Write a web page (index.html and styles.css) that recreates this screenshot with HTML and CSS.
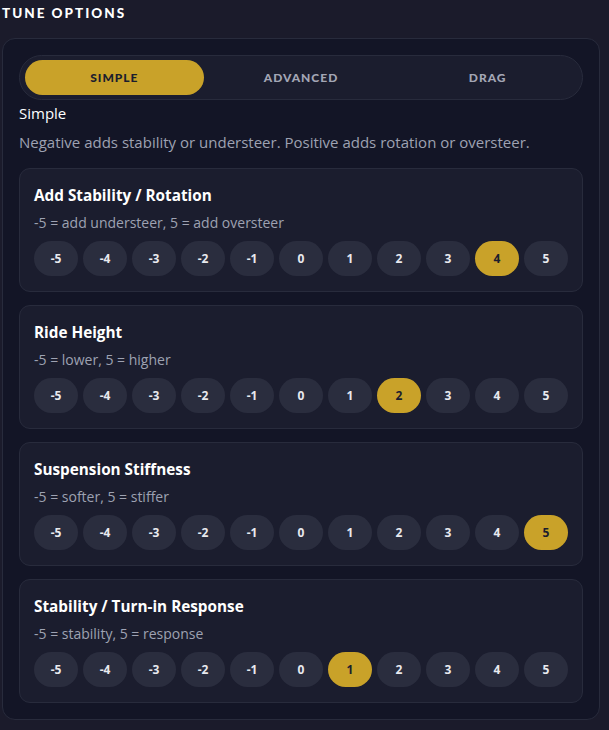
FILE: index.html
```html
<!DOCTYPE html>
<html lang="en">
<head>
    <meta charset="UTF-8">
    <meta name="viewport" content="width=device-width, initial-scale=1.0">
    <title>Tune Options</title>
    <link rel="stylesheet" href="styles.css">
</head>
<body>
    <h2 class="section-title">TUNE OPTIONS</h2>
    <div class="panel">
        <div class="tabs">
            <button class="tab active">SIMPLE</button>
            <button class="tab">ADVANCED</button>
            <button class="tab">DRAG</button>
        </div>
        <div class="mode-name">Simple</div>
        <p class="mode-desc">Negative adds stability or understeer. Positive adds rotation or oversteer.</p>

        <div class="card">
            <h3>Add Stability / Rotation</h3>
            <p class="hint">-5 = add understeer, 5 = add oversteer</p>
            <div class="scale">
                <button>-5</button><button>-4</button><button>-3</button><button>-2</button><button>-1</button><button>0</button><button>1</button><button>2</button><button>3</button><button class="on">4</button><button>5</button>
            </div>
        </div>

        <div class="card">
            <h3>Ride Height</h3>
            <p class="hint">-5 = lower, 5 = higher</p>
            <div class="scale">
                <button>-5</button><button>-4</button><button>-3</button><button>-2</button><button>-1</button><button>0</button><button>1</button><button class="on">2</button><button>3</button><button>4</button><button>5</button>
            </div>
        </div>

        <div class="card">
            <h3>Suspension Stiffness</h3>
            <p class="hint">-5 = softer, 5 = stiffer</p>
            <div class="scale">
                <button>-5</button><button>-4</button><button>-3</button><button>-2</button><button>-1</button><button>0</button><button>1</button><button>2</button><button>3</button><button>4</button><button class="on">5</button>
            </div>
        </div>

        <div class="card">
            <h3>Stability / Turn-in Response</h3>
            <p class="hint">-5 = stability, 5 = response</p>
            <div class="scale">
                <button>-5</button><button>-4</button><button>-3</button><button>-2</button><button>-1</button><button>0</button><button class="on">1</button><button>2</button><button>3</button><button>4</button><button>5</button>
            </div>
        </div>
    </div>
</body>
</html>
```

FILE: styles.css
```css
:root {
    --page-bg: #1b1b2b;
    --panel-bg: #131526;
    --card-bg: #1b1d2e;
    --chip-bg: #2a2d3e;
    --line: #282b3c;
    --gold: #c9a229;
    --text: #ffffff;
    --muted: #9ea2b2;
}

body {
    margin: 0;
    padding: 0 9px 0 2px;
    background-color: var(--page-bg);
    color: var(--text);
    font-family: 'Open Sans', 'Noto Sans', sans-serif;
}

.section-title {
    margin: 0;
    padding-top: 5px;
    height: 38px;
    box-sizing: border-box;
    font-family: 'Lato', sans-serif;
    font-weight: 900;
    font-size: 13.5px;
    letter-spacing: 2px;
    line-height: 16px;
}

.panel {
    background-color: var(--panel-bg);
    border: 1px solid var(--line);
    border-radius: 13px;
    padding: 16px 16px 16px 16px;
}

.tabs {
    display: flex;
    gap: 8px;
    padding: 4px 5px;
    background-color: var(--card-bg);
    border: 1px solid var(--line);
    border-radius: 23px;
}

.tab {
    flex: 1;
    height: 35px;
    border: none;
    border-radius: 18px;
    background: transparent;
    color: #a3a6b5;
    font-family: 'Lato', sans-serif;
    font-weight: 900;
    font-size: 12px;
    letter-spacing: 1px;
    cursor: pointer;
}

.tab.active {
    background-color: var(--gold);
    color: #1b1d2e;
}

.mode-name {
    margin-top: 3px;
    font-size: 15px;
    line-height: 20px;
}

.mode-desc {
    margin: 9px 0 16px;
    color: var(--muted);
    font-size: 15px;
    line-height: 20px;
}

.card {
    background-color: var(--card-bg);
    border: 1px solid var(--line);
    border-radius: 11px;
    padding: 16px 14px 15px;
    margin-bottom: 13px;
}

.card:last-child {
    margin-bottom: 0;
}

.card h3 {
    margin: 0;
    font-size: 15.3px;
    font-weight: 700;
    line-height: 20px;
}

.hint {
    margin: 8px 0 9px;
    color: var(--muted);
    font-size: 14px;
    line-height: 19px;
}

.scale {
    display: flex;
    gap: 5px;
}

.scale button {
    flex: 1;
    height: 35px;
    border: none;
    border-radius: 999px;
    background-color: var(--chip-bg);
    color: #e8e9ee;
    font-family: 'Open Sans', sans-serif;
    font-weight: 700;
    font-size: 12px;
    cursor: pointer;
}

.scale button.on {
    background-color: var(--gold);
    color: #1b1d2e;
}
```
